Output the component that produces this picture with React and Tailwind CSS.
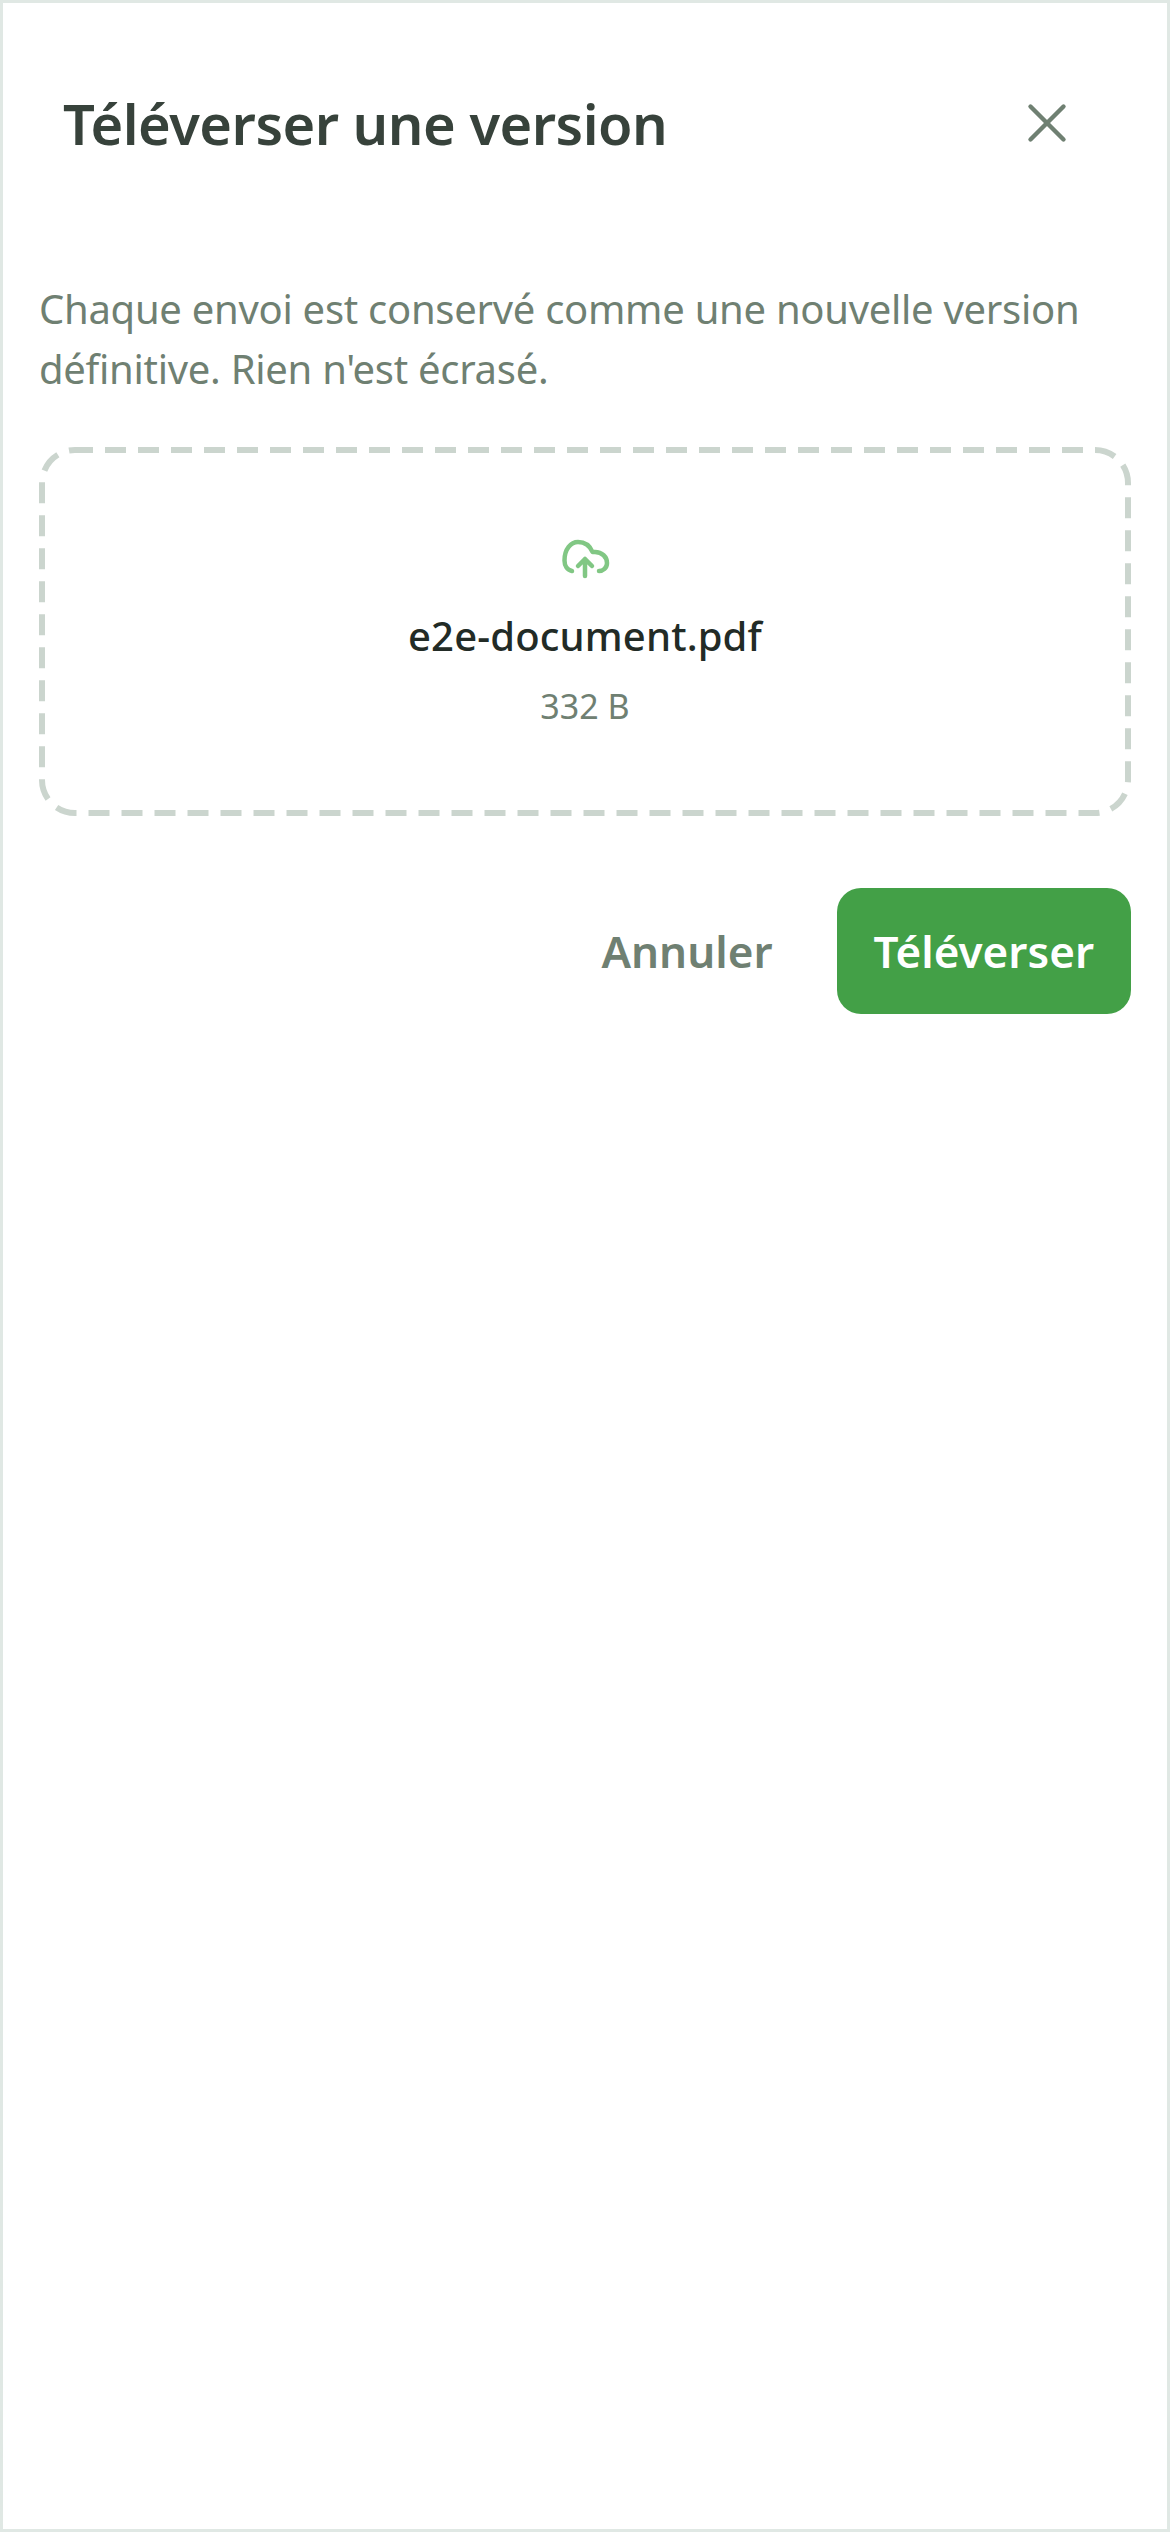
import { X } from "lucide-react"

export default function App() {
  return (
    <div className="w-[1170px] h-[2532px] bg-white border-[3px] border-[#e0e8e4] font-['Noto_Sans',sans-serif]">
      {/* Header */}
      <div className="flex items-center justify-between pl-[60px] pr-[87px] pt-[76px] h-[164px]">
        <h1 className="text-[56px] leading-[72px] font-semibold tracking-[-0.5px] text-[#37423b]">Téléverser une version</h1>
        <X size={66} strokeWidth={1.6} className="text-[#6f8072]" />
      </div>

      <div className="px-[36px] pt-[112px]">
        <p className="text-[40px] leading-[60px] tracking-[-0.28px] text-[#6f8072]">
          Chaque envoi est conservé comme une nouvelle version définitive. Rien n'est écrasé.
        </p>

        {/* Dropzone */}
        <div className="relative mt-[48px] h-[369px] flex flex-col items-center pt-[84px]">
          <svg className="absolute inset-0 w-full h-full" fill="none">
            <rect x="3" y="3" width="1086" height="363" rx="33" stroke="#cbd5ce" strokeWidth="6" strokeDasharray="21 12" strokeDashoffset="3" />
          </svg>
          <svg width="54" height="54" viewBox="0 0 54 54" fill="none" stroke="#81c784" strokeWidth="4.5" strokeLinecap="round" strokeLinejoin="round">
            <path d="M14 40C9 39 6.5 34.5 6.5 29.5C6.5 18 13 11 20 11C27 11 32 15 34.5 21H37C44 21 49 26 49 32C49 37 45 40 41 40" />
            <path d="M27 45V28M20 35L27 28L34 35" />
          </svg>
          <p className="mt-[21px] text-[40px] leading-[60px] font-medium tracking-[0.15px] text-[#222b26]">e2e-document.pdf</p>
          <p className="mt-[16px] text-[34px] leading-[48px] text-[#6f8072]">332 B</p>
        </div>

        {/* Actions */}
        <div className="mt-[72px] flex items-center justify-end gap-[24px]">
          <button className="px-[40px] h-[126px] text-[44px] font-semibold text-[#6f8072]">Annuler</button>
          <button className="px-[37px] h-[126px] rounded-[24px] bg-[#43a047] text-[44px] font-semibold text-white">Téléverser</button>
        </div>
      </div>
    </div>
  )
}
